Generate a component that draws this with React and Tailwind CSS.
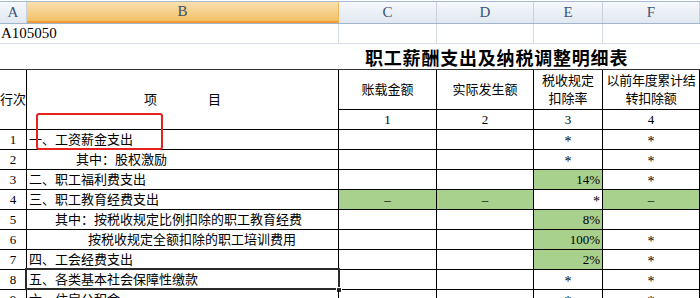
import React from 'react';

// Spreadsheet view: 职工薪酬支出及纳税调整明细表 (A105050)

const headCols = [
  { label: 'A', w: 'w-[27px]' },
  { label: 'B', w: 'w-[312px]', sel: true },
  { label: 'C', w: 'w-[98px]' },
  { label: 'D', w: 'w-[97px]' },
  { label: 'E', w: 'w-[69px]' },
  { label: 'F', w: 'w-[97px]' },
];

const rows = [
  { n: '1', item: '一、工资薪金支出', pad: 'pl-[2px]', e: '*', f: '*' },
  { n: '2', item: '其中：股权激励', pad: 'pl-[49px]', e: '*', f: '*' },
  { n: '3', item: '二、职工福利费支出', pad: 'pl-[2px]', e: '14%', eGreen: true, f: '*' },
  { n: '4', item: '三、职工教育经费支出', pad: 'pl-[2px]', c: '–', d: '–', cdGreen: true, e: '*', eRight: true, f: '–', fGreen: true },
  { n: '5', item: '其中：按税收规定比例扣除的职工教育经费', pad: 'pl-[28px]', e: '8%', eGreen: true, f: '' },
  { n: '6', item: '按税收规定全额扣除的职工培训费用', pad: 'pl-[61px]', e: '100%', eGreen: true, f: '*' },
  { n: '7', item: '四、工会经费支出', pad: 'pl-[2px]', e: '2%', eGreen: true, f: '*' },
  { n: '8', item: '五、各类基本社会保障性缴款', pad: 'pl-[2px]', e: '*', f: '*', selected: true },
  { n: '9', item: '六、住房公积金', pad: 'pl-[2px]', e: '*', f: '*' },
];

function Cell({ children, className = '', lh = 'leading-none' }) {
  return (
    <div className={`border-r border-b border-black flex items-center text-[13px] whitespace-nowrap ${lh} ${className}`}>
      {children}
    </div>
  );
}

export default function App() {
  return (
    <div className="w-[700px] h-[298px] overflow-hidden bg-white text-black font-['Liberation_Serif','Noto_Sans_CJK_SC',serif] relative">
      {/* column letters */}
      <div className="mt-[1px] border-t border-[#a7bcd3] h-[23px] flex border-b border-b-[#9fb5cc]">
        {headCols.map((c) =>
          c.sel ? (
            <div key={c.label} className={`${c.w} shrink-0 h-full flex items-center justify-center bg-gradient-to-b from-[#f9e0b0] to-[#f2c164] border-r border-[#f0b860] border-b-2 border-b-[#f29b36] text-[15px] text-[#3d4f63]`}>
              {c.label}
            </div>
          ) : (
            <div key={c.label} className={`${c.w} shrink-0 h-full flex items-center justify-center bg-gradient-to-b from-[#f5f8fc] to-[#e1e8f1] border-r border-[#c5d1de] text-[15px] text-[#3a5578]`}>
              {c.label}
            </div>
          )
        )}
      </div>

      {/* row: A105050 */}
      <div className="h-[20px] flex border-b border-[#d5dce6]">
        <div className="w-[339px] shrink-0 border-r border-[#d5dce6] flex items-center pl-[1px] text-[15px] text-black">A105050</div>
        <div className="w-[98px] shrink-0 border-r border-[#d5dce6]" />
        <div className="w-[97px] shrink-0 border-r border-[#d5dce6]" />
        <div className="w-[69px] shrink-0 border-r border-[#d5dce6]" />
        <div className="w-[97px] shrink-0" />
      </div>

      {/* title row */}
      <div className="h-[25px] flex items-center pl-[365px]">
        <span className="text-[18px] font-bold tracking-[0.8px] font-['Noto_Sans_CJK_SC',sans-serif] leading-none">职工薪酬支出及纳税调整明细表</span>
      </div>

      {/* table */}
      <div className="border-t border-[#333] grid grid-cols-[27px_312px_98px_97px_69px_97px] grid-rows-[40px_20px_repeat(9,20px)]">
        <Cell className="row-span-2 justify-center">行次</Cell>
        <Cell className="row-span-2 justify-center gap-[51px]">
          <span>项</span>
          <span>目</span>
        </Cell>
        <Cell className="justify-center">账载金额</Cell>
        <Cell className="justify-center">实际发生额</Cell>
        <Cell className="justify-center text-center" lh="leading-[18px]">税收规定<br />扣除率</Cell>
        <Cell className="justify-center text-center tracking-[-0.3px]" lh="leading-[18px]">以前年度累计结<br />转扣除额</Cell>

        <Cell className="justify-center">1</Cell>
        <Cell className="justify-center">2</Cell>
        <Cell className="justify-center">3</Cell>
        <Cell className="justify-center">4</Cell>

        {rows.map((r) => (
          <React.Fragment key={r.n}>
            <Cell className="justify-center">{r.n}</Cell>
            <Cell className={`${r.pad} relative`}>
              {r.item}
              {r.selected && (
                <>
                  <div className="absolute left-[-2px] top-[-2px] right-[-2px] bottom-[-1px] border-2 border-[#2b2b2b] pointer-events-none" />
                  <div className="absolute right-[-4px] bottom-[-4px] w-[6px] h-[6px] bg-[#2b2b2b] border border-white" />
                </>
              )}
            </Cell>
            <Cell className={`justify-center ${r.cdGreen ? 'bg-[#a9d18e]' : ''}`}>{r.c}</Cell>
            <Cell className={`justify-center ${r.cdGreen ? 'bg-[#a9d18e]' : ''}`}>{r.d}</Cell>
            <Cell className={r.eGreen || r.eRight ? `justify-end pr-[2px] ${r.eGreen ? 'bg-[#a9d18e]' : ''}` : 'justify-center'}>
              <span className={r.e === '*' ? 'text-[14px] translate-y-[2px]' : ''}>{r.e}</span>
            </Cell>
            <Cell className={`justify-center ${r.fGreen ? 'bg-[#a9d18e]' : ''}`}>
              <span className={r.f === '*' ? 'text-[14px] translate-y-[2px]' : ''}>{r.f}</span>
            </Cell>
          </React.Fragment>
        ))}
      </div>

      {/* red annotation box */}
      <div className="absolute left-[36px] top-[113px] w-[127px] h-[37px] border-2 border-[#e5221c] rounded-[3px] pointer-events-none" />
    </div>
  );
}
